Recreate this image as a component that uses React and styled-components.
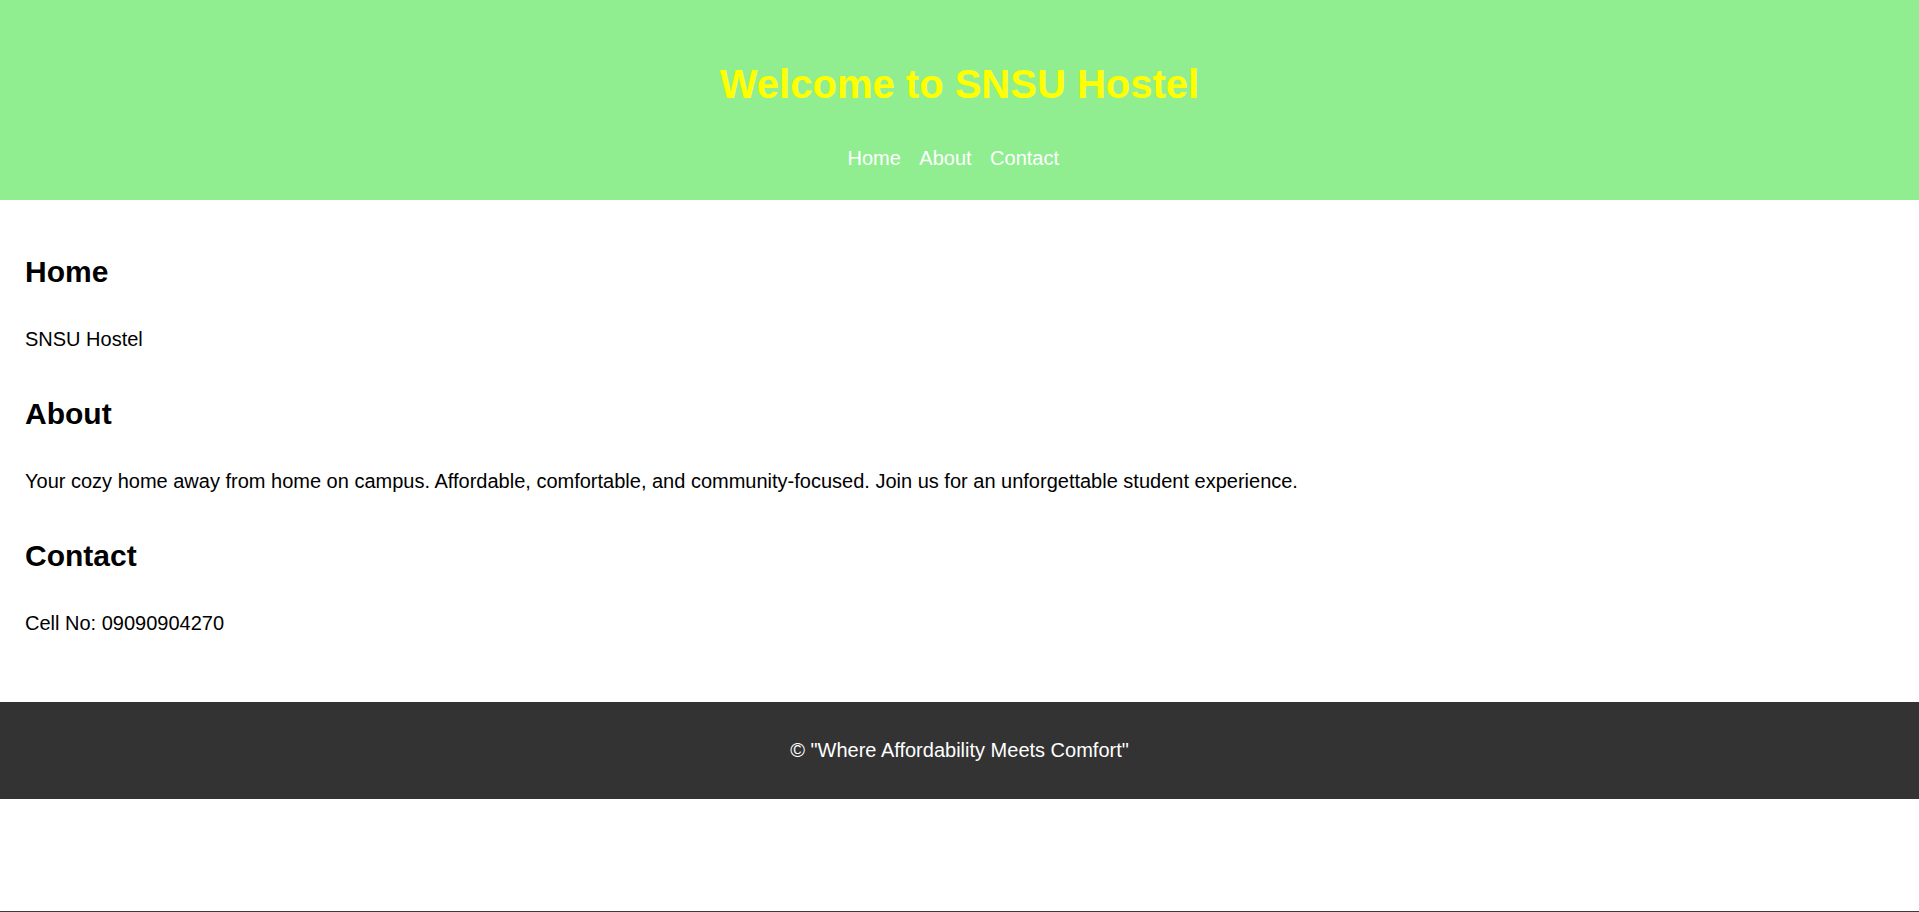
import React from "react";
import styled, { createGlobalStyle } from "styled-components";

const GlobalStyle = createGlobalStyle`
  html, body {
    margin: 0;
    padding: 0;
  }
  body {
    font-family: "Liberation Sans", Arial, sans-serif;
    color: #000;
    background: #fff;
    min-height: 100vh;
    box-sizing: border-box;
    border-bottom: 1px solid #3c3c3c;
  }
`;

const Header = styled.header`
  background: #90ee90;
  padding: 61px 20px 30px;
  text-align: center;
`;

const Title = styled.h1`
  margin: 0 0 40px;
  font-size: 40px;
  font-weight: bold;
  line-height: 46px;
  color: #ffff00;
`;

const Nav = styled.nav`
  display: flex;
  justify-content: center;
  gap: 6px;
`;

const NavLink = styled.a`
  font-size: 20px;
  line-height: 23px;
  color: #fff;
  text-decoration: none;
  margin-right: 12.5px;
`;

const Main = styled.main`
  padding: 55px 25px 67px;
  display: flex;
  flex-direction: column;
  gap: 46px;
`;

const Section = styled.section`
  display: flex;
  flex-direction: column;
  gap: 38.5px;
`;

const Heading = styled.h2`
  margin: 0;
  font-size: 30px;
  line-height: 34.5px;
  font-weight: bold;
`;

const Text = styled.p`
  margin: 0;
  font-size: 20px;
  line-height: 23px;
`;

const Footer = styled.footer`
  background: #333;
  color: #fff;
  text-align: center;
  padding: 37px 20px;
  font-size: 20px;
  line-height: 23px;
`;

const sections = [
  { id: "home", title: "Home", text: "SNSU Hostel" },
  {
    id: "about",
    title: "About",
    text: "Your cozy home away from home on campus. Affordable, comfortable, and community-focused. Join us for an unforgettable student experience.",
  },
  { id: "contact", title: "Contact", text: "Cell No: 09090904270" },
];

export default function App() {
  return (
    <>
      <GlobalStyle />
      <Header>
        <Title>Welcome to SNSU Hostel</Title>
        <Nav>
          <NavLink href="#home">Home</NavLink>
          <NavLink href="#about">About</NavLink>
          <NavLink href="#contact">Contact</NavLink>
        </Nav>
      </Header>
      <Main>
        {sections.map((s) => (
          <Section key={s.id} id={s.id}>
            <Heading>{s.title}</Heading>
            <Text>{s.text}</Text>
          </Section>
        ))}
      </Main>
      <Footer>© "Where Affordability Meets Comfort"</Footer>
    </>
  );
}
